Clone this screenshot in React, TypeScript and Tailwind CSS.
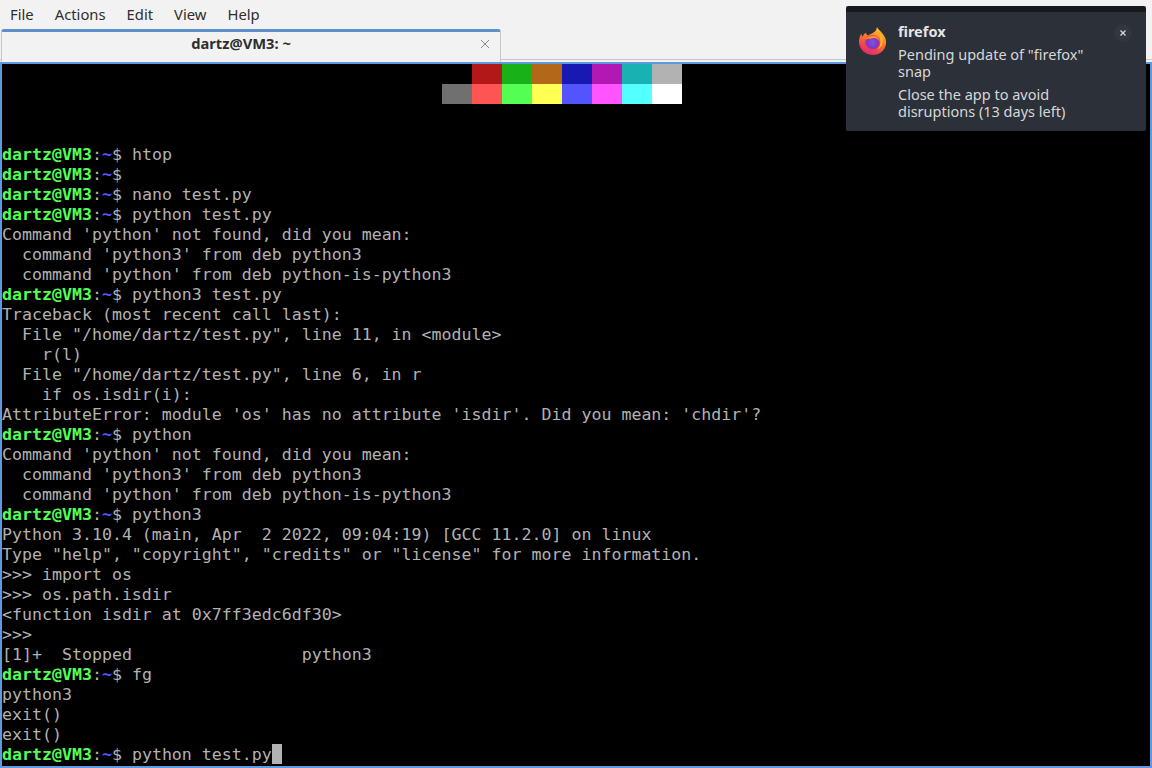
const menus = ["File", "Actions", "Edit", "View", "Help"];

const topColors = ["bg-[#b21818]", "bg-[#18b218]", "bg-[#b26818]", "bg-[#1818b2]", "bg-[#b218b2]", "bg-[#18b2b2]", "bg-[#b2b2b2]"];
const brightColors = ["bg-[#707070]", "bg-[#ff5454]", "bg-[#54ff54]", "bg-[#ffff54]", "bg-[#5454ff]", "bg-[#ff54ff]", "bg-[#54ffff]", "bg-[#ffffff]"];

// cmd = prompt line, text = plain output
const lines: { cmd?: string; text?: string }[] = [
  { cmd: "htop" },
  { cmd: "" },
  { cmd: "nano test.py" },
  { cmd: "python test.py" },
  { text: "Command 'python' not found, did you mean:" },
  { text: "  command 'python3' from deb python3" },
  { text: "  command 'python' from deb python-is-python3" },
  { cmd: "python3 test.py" },
  { text: "Traceback (most recent call last):" },
  { text: '  File "/home/dartz/test.py", line 11, in <module>' },
  { text: "    r(l)" },
  { text: '  File "/home/dartz/test.py", line 6, in r' },
  { text: "    if os.isdir(i):" },
  { text: "AttributeError: module 'os' has no attribute 'isdir'. Did you mean: 'chdir'?" },
  { cmd: "python" },
  { text: "Command 'python' not found, did you mean:" },
  { text: "  command 'python3' from deb python3" },
  { text: "  command 'python' from deb python-is-python3" },
  { cmd: "python3" },
  { text: "Python 3.10.4 (main, Apr  2 2022, 09:04:19) [GCC 11.2.0] on linux" },
  { text: 'Type "help", "copyright", "credits" or "license" for more information.' },
  { text: ">>> import os" },
  { text: ">>> os.path.isdir" },
  { text: "<function isdir at 0x7ff3edc6df30>" },
  { text: ">>> " },
  { text: "[1]+  Stopped                 python3" },
  { cmd: "fg" },
  { text: "python3" },
  { text: "exit()" },
  { text: "exit()" },
];

function Prompt({ cmd }: { cmd: string }) {
  return (
    <>
      <span className="font-bold text-[#54ff54]">dartz@VM3</span>
      <span>:</span>
      <span className="font-bold text-[#5454ff]">~</span>
      <span>$ {cmd}</span>
    </>
  );
}

function FirefoxIcon() {
  return (
    <svg width="30" height="30" viewBox="0 0 30 30">
      <defs>
        <linearGradient id="ffBody" x1="0.75" y1="0.05" x2="0.3" y2="1">
          <stop offset="0" stopColor="#ffc52e" />
          <stop offset="0.4" stopColor="#ff7a24" />
          <stop offset="1" stopColor="#e0246e" />
        </linearGradient>
        <radialGradient id="ffGlobe" cx="0.5" cy="0.5" r="0.6">
          <stop offset="0" stopColor="#7f55e6" />
          <stop offset="1" stopColor="#7a2cb0" />
        </radialGradient>
      </defs>
      <path
        d="M19 1c1 2.500 3.500 4 5.500 6.500 3 3.500 4 7 3.500 10.500-1 6.500-6.500 11-13 11C7.500 29 1.500 23.500 1 16.500c-.2-3 .6-6.500 2.500-9 0 1.500.5 2.500 1.200 3.200.4-1.500 1.500-3 3.300-4 .2 1.500 1 2.300 2 2.800C12 8 16 7 17.500 5c.8-1.200 1.300-2.500 1.500-4z"
        fill="url(#ffBody)"
      />
      <circle cx="14.500" cy="17" r="8" fill="#e8386a" />
      <circle cx="14.500" cy="16.500" r="6.500" fill="url(#ffGlobe)" />
      <path d="M7 13.500c2-2.800 6.500-4.500 10-3.500 2.500.7 4.500 3 4.500 5.500-1.500-2.300-3.500-3.700-6-3.500-1.500.1-2.500.5-3 1-1.500-.4-3.500-.3-5.500.5z" fill="#ff8a28" />
      <path d="M22 8c2.500 2.500 3.500 6 2.500 9.500-.7 2.800-3 5-5.500 6 2-2 3.500-4.500 3.500-7.500 0-3-.5-5.500-.5-8z" fill="#ffb52e" />
    </svg>
  );
}

export default function App() {
  return (
    <div className="relative flex h-[768px] w-[1152px] flex-col overflow-hidden bg-[#f2f2f2]">
      {/* Menu bar */}
      <div className="flex h-[29px] items-center gap-[21px] pl-[10px] font-['Noto_Sans',sans-serif] text-[14.8px] text-[#2e2e2e]">
        {menus.map((m) => (
          <span key={m}>{m}</span>
        ))}
      </div>

      {/* Tab strip */}
      <div className="mb-[2px] flex h-[31px] items-start border-b border-[#c4c8cc] pl-px">
        <div className="relative flex h-[33px] w-[500px] items-center justify-center rounded-t-[3px] border-x border-t-[3px] border-x-[#c4c8cc] border-t-[#5f8fc7] bg-[#f2f2f2] pb-[7px] pr-[20px] font-['Noto_Sans',sans-serif] text-[14.7px] font-bold text-[#2e2e2e]">
          dartz@VM3: ~
          <svg className="absolute right-[10px] top-[7px]" width="10" height="10" viewBox="0 0 10 10">
            <path d="M1 1l8 8M9 1l-8 8" stroke="#8a8a8a" strokeWidth="1" fill="none" />
          </svg>
        </div>
      </div>

      {/* Terminal */}
      <div className="min-h-0 flex-1 overflow-hidden border-2 border-[#5f98dc] bg-black font-['DejaVu_Sans_Mono',monospace] text-[16.6px] leading-[20px] whitespace-pre text-[#b2b2b2]">
        <div className="flex h-[20px] pl-[470px]">
          {topColors.map((c) => (
            <div key={c} className={`h-[20px] w-[30px] ${c}`} />
          ))}
        </div>
        <div className="flex h-[20px] pl-[440px]">
          {brightColors.map((c) => (
            <div key={c} className={`h-[20px] w-[30px] ${c}`} />
          ))}
        </div>
        <div className="h-[40px]" />
        {lines.map((l, i) => (
          <div key={i} className="h-[20px] pt-px">
            {l.cmd !== undefined ? <Prompt cmd={l.cmd} /> : l.text}
          </div>
        ))}
        <div className="flex h-[20px]">
          <span className="pt-px">
            <Prompt cmd="python test.py" />
          </span>
          <span className="h-[20px] w-[10px] bg-[#b2b2b2]" />
        </div>
      </div>

      {/* Snap notification */}
      <div className="absolute left-[846px] top-[6px] flex h-[125px] w-[300px] rounded-[2px] border-t-[6px] border-t-[#17191d] bg-[#2c3038] font-['Noto_Sans',sans-serif] text-[14.5px] leading-[17px] text-[#d6d7d9]">
        <div className="pl-[12px] pt-[14px]">
          <FirefoxIcon />
        </div>
        <div className="pl-[10px] pt-[11px]">
          <div className="font-bold text-[#e4e5e6]">firefox</div>
          <div className="mt-[6px] w-[210px]">Pending update of "firefox" snap</div>
          <div className="mt-[6px] w-[210px]">Close the app to avoid disruptions (13 days left)</div>
        </div>
        <div className="absolute left-[268px] top-[12px] flex h-[18px] w-[18px] items-center justify-center rounded-full bg-[#32363e]">
          <svg width="6" height="6" viewBox="0 0 6 6">
            <path d="M.5.5l5 5M5.500.5l-5 5" stroke="#d6d7d9" strokeWidth="1.300" fill="none" />
          </svg>
        </div>
      </div>
    </div>
  );
}
